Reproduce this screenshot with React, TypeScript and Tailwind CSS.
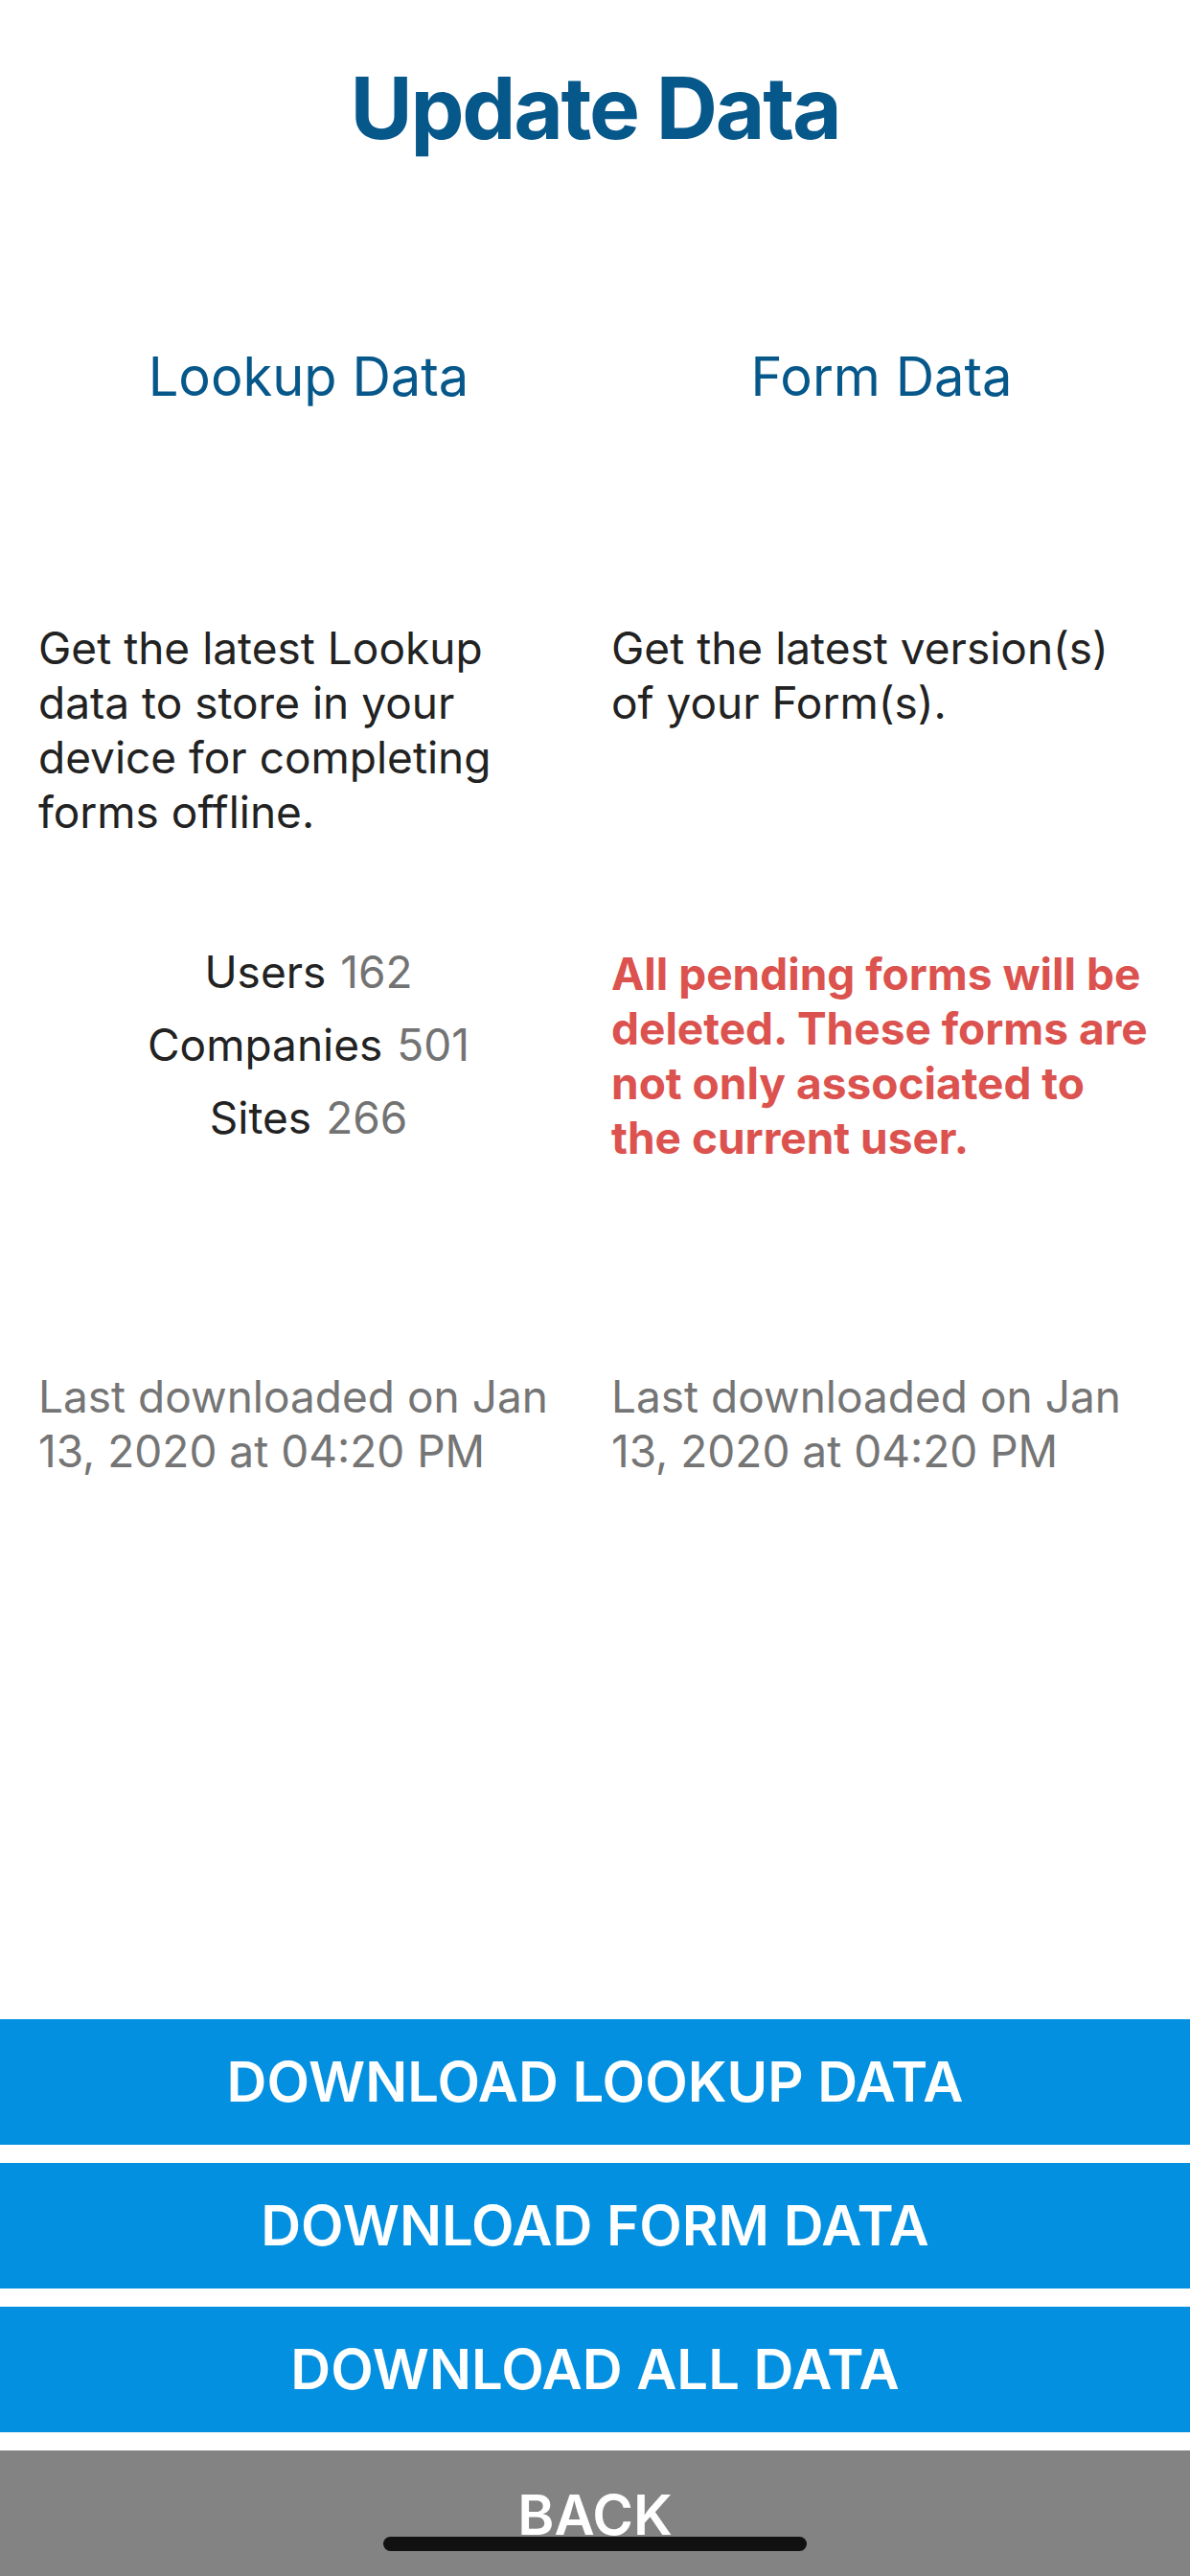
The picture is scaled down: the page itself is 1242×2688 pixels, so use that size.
import React from 'react'

const font = { fontFamily: 'Inter, "Liberation Sans", sans-serif' }

const stats = [
  { label: 'Users', value: '162' },
  { label: 'Companies', value: '501' },
  { label: 'Sites', value: '266' },
]

const actions = ['DOWNLOAD LOOKUP DATA', 'DOWNLOAD FORM DATA', 'DOWNLOAD ALL DATA']

export default function App() {
  return (
    <div
      className="relative flex h-[2688px] w-[1242px] flex-col overflow-hidden bg-white"
      style={font}
    >
      <h1 className="pt-[58px] text-center text-[89px] leading-[110px] font-bold tracking-[-0.025em] text-[#06578a]">
        Update Data
      </h1>

      <div className="mt-[191px] grid grid-cols-2 gap-x-[34px] px-[40px]">
        {/* headings */}
        <h2 className="text-center text-[56px] leading-[68px] text-[#06578a]">Lookup Data</h2>
        <h2 className="text-center text-[56px] leading-[68px] text-[#06578a]">Form Data</h2>

        {/* descriptions */}
        <p className="mt-[221px] whitespace-nowrap text-[46px] leading-[57px] text-[#222222]">
          Get the latest Lookup
          <br />
          data to store in your
          <br />
          device for completing
          <br />
          forms offline.
        </p>
        <p className="mt-[221px] whitespace-nowrap text-[46px] leading-[57px] text-[#222222]">
          Get the latest version(s)
          <br />
          of your Form(s).
        </p>

        {/* counts / warning */}
        <div className="mt-[100px] flex flex-col items-center">
          {stats.map((s) => (
            <div key={s.label} className="flex h-[76px] items-center gap-[15px] text-[46px] leading-[76px]">
              <span className="text-[#222222]">{s.label}</span>
              <span className="text-[#737373]">{s.value}</span>
            </div>
          ))}
        </div>
        <p className="mt-[112px] whitespace-nowrap text-[46px] leading-[57px] font-bold text-[#db524e]">
          All pending forms will be
          <br />
          deleted. These forms are
          <br />
          not only associated to
          <br />
          the current user.
        </p>

        {/* last downloaded */}
        <p className="mt-[213px] whitespace-nowrap text-[46px] leading-[57px] text-[#757575]">
          Last downloaded on Jan
          <br />
          13, 2020 at 04:20 PM
        </p>
        <p className="mt-[213px] whitespace-nowrap text-[46px] leading-[57px] text-[#757575]">
          Last downloaded on Jan
          <br />
          13, 2020 at 04:20 PM
        </p>
      </div>

      <div className="mt-auto flex flex-col gap-[19px]">
        {actions.map((a) => (
          <button
            key={a}
            className="flex h-[131px] w-full items-center justify-center bg-[#0390e0] text-[58px] font-semibold text-white"
          >
            {a}
          </button>
        ))}
        <button className="flex h-[131px] w-full items-start justify-center bg-[#838383] pt-[24px] text-[58px] font-semibold text-white">
          BACK
        </button>
      </div>

      {/* home indicator */}
      <div className="absolute bottom-[26px] left-1/2 h-[15px] w-[442px] -translate-x-1/2 rounded-full bg-[#111111]" />
    </div>
  )
}
